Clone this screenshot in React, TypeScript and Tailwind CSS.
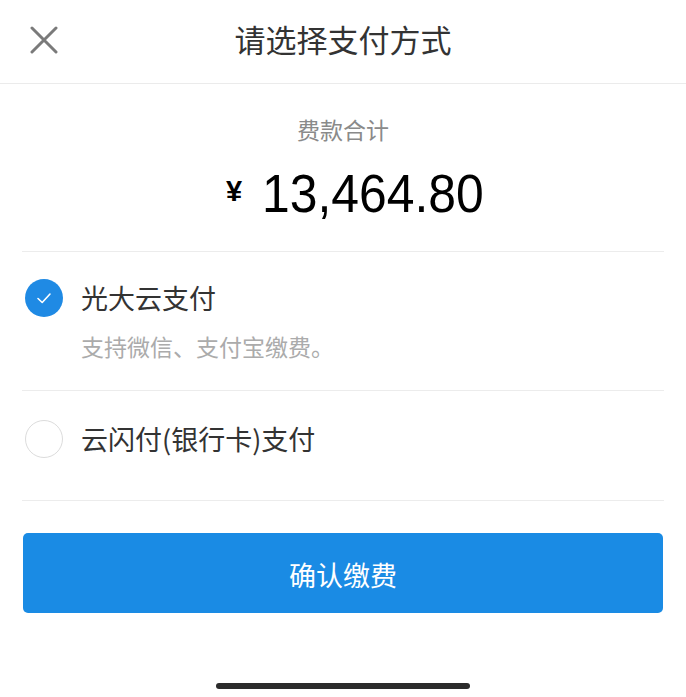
const cjk = '"Noto Sans CJK SC", "Noto Sans", sans-serif'

function CloseIcon() {
  return (
    <svg width="28" height="28" viewBox="0 0 28 28" className="block">
      <path d="M2 2L26 26M26 2L2 26" stroke="#7a7a7a" strokeWidth="3" strokeLinecap="round" />
    </svg>
  )
}

function Radio({ checked }: { checked?: boolean }) {
  if (checked) {
    return (
      <div className="flex h-[38px] w-[38px] shrink-0 items-center justify-center rounded-full bg-[#1f8ae4]">
        <svg width="20" height="20" viewBox="0 0 20 20">
          <path d="M4 10.5L8.2 14.5L16 6" fill="none" stroke="#ffffff" strokeWidth="1.6" strokeLinecap="round" strokeLinejoin="round" />
        </svg>
      </div>
    )
  }
  return <div className="h-[38px] w-[38px] shrink-0 rounded-full border border-[#dcdcdc] bg-white" />
}

export default function App() {
  return (
    <div className="flex h-[697px] w-[686px] flex-col bg-white text-[#333]" style={{ fontFamily: cjk }}>
      <header className="grid h-[84px] grid-cols-[1fr_auto_1fr] items-center border-b border-[#ebebeb] pb-[6px]">
        <div className="pt-[3px] pl-[30px]">
          <CloseIcon />
        </div>
        <h1 className="text-[31px] leading-[31px] font-normal text-[#333]">请选择支付方式</h1>
        <div />
      </header>

      <section className="flex flex-col items-center pt-[34px] pb-[30px]">
        <div className="text-[23px] leading-[23px] text-[#8a8a8a]">费款合计</div>
        <div className="mt-[26px] flex items-center pl-[38px] text-black" style={{ fontFamily: '"Liberation Sans", Arial, sans-serif' }}>
          <span className="mr-[20px] mb-[6px] text-[29px] leading-[29px] font-bold">¥</span>
          <span className="origin-left scale-x-[0.94] text-[53px] leading-[54px]">13,464.80</span>
        </div>
      </section>

      <div className="mx-[22px] h-px bg-[#ececec]" />

      <div className="pt-[27px] pb-[32px] pl-[25px]">
        <div className="flex items-center gap-[18px]">
          <Radio checked />
          <span className="text-[27px] leading-[38px]">光大云支付</span>
        </div>
        <div className="mt-[18px] pl-[56px] text-[23px] leading-[23px] text-[#ababab]">支持微信、支付宝缴费。</div>
      </div>

      <div className="mx-[22px] h-px bg-[#ececec]" />

      <div className="flex items-center gap-[18px] pt-[29px] pb-[42px] pl-[25px]">
        <Radio />
        <span className="text-[27px] leading-[38px]">云闪付(银行卡)支付</span>
      </div>

      <div className="mx-[22px] h-px bg-[#ececec]" />

      <button className="mx-[23px] mt-[32px] flex h-[80px] items-center justify-center rounded-[5px] bg-[#1a8be4] pt-[3px] text-[27px] leading-[27px] text-white">
        确认缴费
      </button>

      <div className="mt-[70px] flex justify-center">
        <div className="h-[6px] w-[254px] rounded-full bg-[#2b2b2b]" />
      </div>
    </div>
  )
}
